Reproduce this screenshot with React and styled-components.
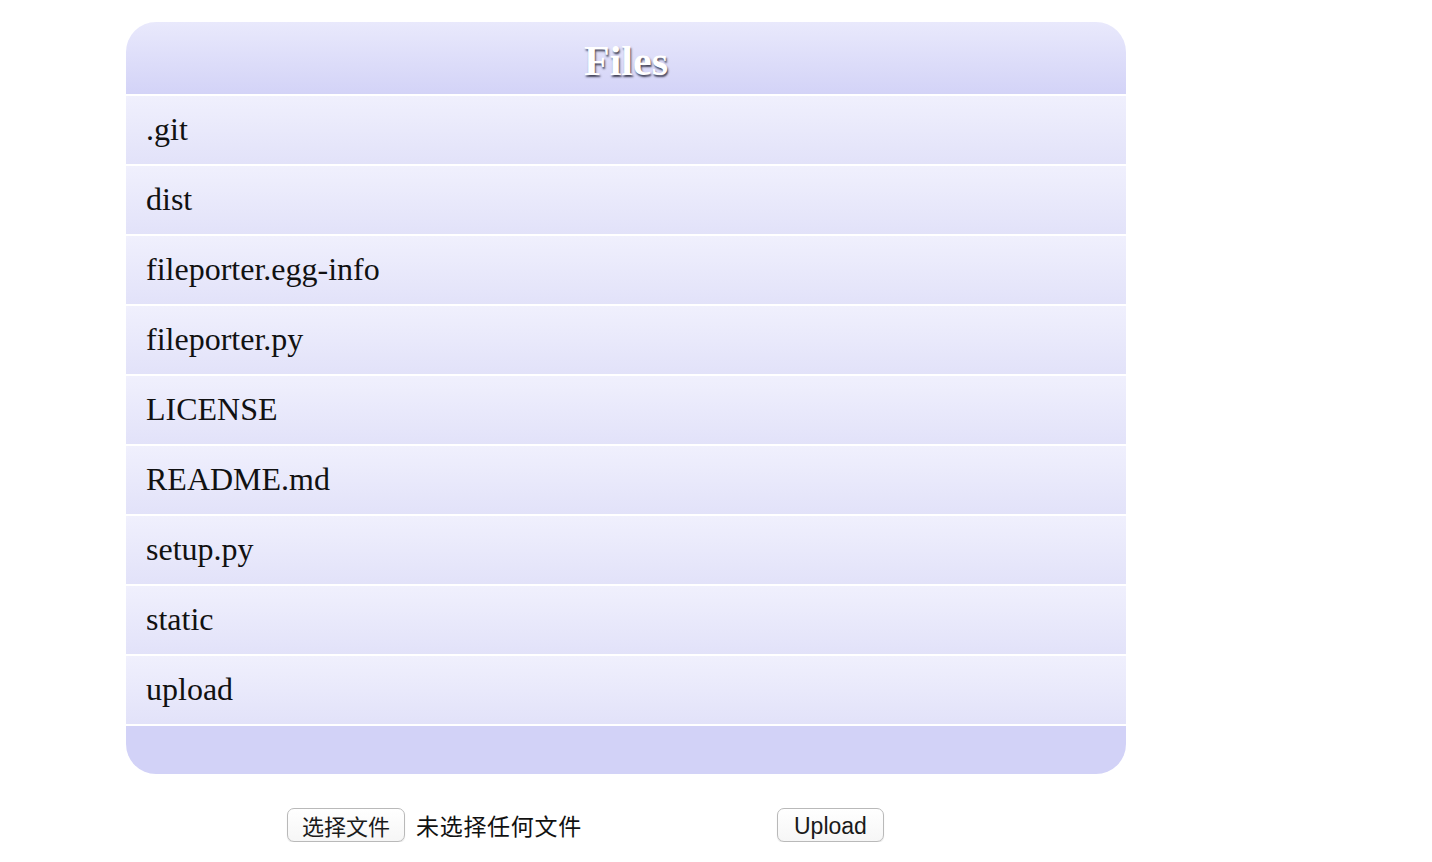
import React from "react";
import styled, { createGlobalStyle } from "styled-components";

const GlobalStyle = createGlobalStyle`
  html, body {
    margin: 0;
    padding: 0;
    background: #ffffff;
  }
  body {
    font-family: "Liberation Serif", "Times New Roman", serif;
  }
`;

const Page = styled.div`
  padding: 22px 0 0 126px;
`;

const Panel = styled.div`
  width: 1000px;
  border-radius: 30px;
  overflow: hidden;
  background: #ffffff;
`;

const Header = styled.div`
  height: 72px;
  display: flex;
  align-items: center;
  justify-content: center;
  background: linear-gradient(to bottom, #e9e9fc 0%, #d3d3f7 100%);
  color: #ffffff;
  font-family: "Liberation Serif", "Times New Roman", serif;
  font-weight: bold;
  font-size: 42px;
  padding-top: 6px;
  box-sizing: border-box;
  text-shadow: 1px 2px 2px rgba(40, 40, 60, 0.85);
`;

const Row = styled.div`
  height: 68px;
  margin-top: 2px;
  box-sizing: border-box;
  padding: 0 0 2px 20px;
  display: flex;
  align-items: center;
  background: linear-gradient(to bottom, #f0f0fd 0%, #e2e2f9 100%);
  color: #111111;
  font-size: 32px;
`;

const Footer = styled.div`
  height: 48px;
  margin-top: 2px;
  background: #d2d2f7;
`;

const Form = styled.form`
  display: flex;
  align-items: center;
  margin: 34px 0 0 161px;
`;

const Picker = styled.div`
  width: 490px;
  display: flex;
  align-items: center;
`;

const Button = styled.button`
  height: 34px;
  box-sizing: border-box;
  padding: ${(p) => p.$top || 0}px ${(p) => p.$pad || 15}px 0;
  background: linear-gradient(to bottom, #ffffff, #f6f6f6);
  border: 1px solid #b9b9b9;
  border-radius: 7px;
  box-shadow: 0 1px 1px rgba(0, 0, 0, 0.12);
  color: #1a1a1a;
  font-size: ${(p) => p.$size || 22}px;
  font-family: ${(p) =>
    p.$cjk
      ? `"Noto Sans CJK SC", "Liberation Sans", sans-serif`
      : `"Liberation Sans", Arial, sans-serif`};
  line-height: 1;
`;

const NoFile = styled.span`
  margin-left: 11px;
  font-size: 23px;
  letter-spacing: 0.7px;
  color: #111111;
  font-family: "Noto Sans CJK SC", "Liberation Sans", sans-serif;
`;

const files = [
  ".git",
  "dist",
  "fileporter.egg-info",
  "fileporter.py",
  "LICENSE",
  "README.md",
  "setup.py",
  "static",
  "upload",
];

export default function App() {
  return (
    <>
      <GlobalStyle />
      <Page>
        <Panel>
          <Header>Files</Header>
          {files.map((f) => (
            <Row key={f}>{f}</Row>
          ))}
          <Footer />
        </Panel>
        <Form onSubmit={(e) => e.preventDefault()}>
          <Picker>
            <Button type="button" $cjk $size={22} $pad={14}>
              选择文件
            </Button>
            <NoFile>未选择任何文件</NoFile>
          </Picker>
          <Button type="submit" $size={23} $pad={16} $top={3}>
            Upload
          </Button>
        </Form>
      </Page>
    </>
  );
}
